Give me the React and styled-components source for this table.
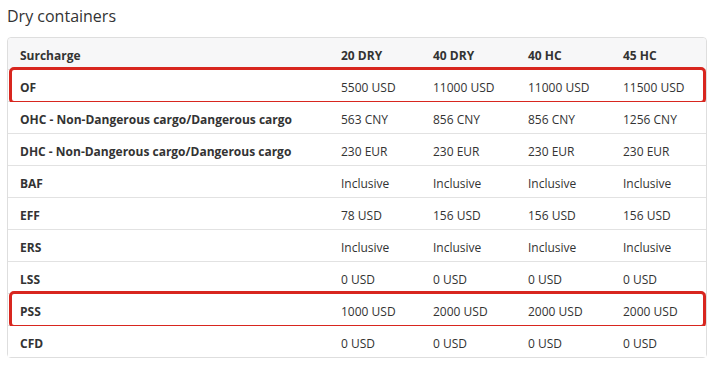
import styled, { createGlobalStyle } from "styled-components";

const GlobalStyle = createGlobalStyle`
  body {
    margin: 0;
    background: #fff;
    font-family: "Open Sans", "Noto Sans", sans-serif;
    color: #333;
  }
`;

const sizes = ["20 DRY", "40 DRY", "40 HC", "45 HC"];

const rows = [
  { name: "OF", values: ["5500 USD", "11000 USD", "11000 USD", "11500 USD"], marked: true },
  { name: "OHC - Non-Dangerous cargo/Dangerous cargo", values: ["563 CNY", "856 CNY", "856 CNY", "1256 CNY"] },
  { name: "DHC - Non-Dangerous cargo/Dangerous cargo", values: ["230 EUR", "230 EUR", "230 EUR", "230 EUR"] },
  { name: "BAF", values: ["Inclusive", "Inclusive", "Inclusive", "Inclusive"] },
  { name: "EFF", values: ["78 USD", "156 USD", "156 USD", "156 USD"] },
  { name: "ERS", values: ["Inclusive", "Inclusive", "Inclusive", "Inclusive"] },
  { name: "LSS", values: ["0 USD", "0 USD", "0 USD", "0 USD"] },
  { name: "PSS", values: ["1000 USD", "2000 USD", "2000 USD", "2000 USD"], marked: true },
  { name: "CFD", values: ["0 USD", "0 USD", "0 USD", "0 USD"] },
];

const App = () => {
  return (
    <Page>
      <GlobalStyle />
      <Title>Dry containers</Title>
      <Table>
        <Row $head>
          <Cell $bold>Surcharge</Cell>
          {sizes.map((s) => (
            <Cell key={s} $bold>{s}</Cell>
          ))}
        </Row>
        {rows.map((r) => (
          <Row key={r.name} $marked={r.marked}>
            <Cell $bold>{r.name}</Cell>
            {r.values.map((v, i) => (
              <Cell key={i}>{v}</Cell>
            ))}
          </Row>
        ))}
      </Table>
    </Page>
  );
};

export default App;

const Page = styled.div`
  padding: 0 7px;
  width: 700px;
`;

const Title = styled.div`
  height: 37px;
  padding-top: 6px;
  box-sizing: border-box;
  font-size: 16px;
  line-height: 20px;
  font-weight: 400;
  color: #333;
`;

const Table = styled.div`
  width: 700px;
  box-sizing: border-box;
  border: 1px solid #dedede;
  border-radius: 4px;
`;

const Row = styled.div`
  position: relative;
  display: grid;
  grid-template-columns: 321px 92px 95px 95px 95px;
  height: 32px;
  box-sizing: border-box;
  border-bottom: 1px solid #e2e2e2;
  background: ${(p) => (p.$head ? "#f7f7f8" : "#fff")};
  border-radius: ${(p) => (p.$head ? "4px 4px 0 0" : "0")};

  &:last-child {
    border-bottom: none;
    height: 31px;
  }

  &::after {
    content: "";
    display: ${(p) => (p.$marked ? "block" : "none")};
    position: absolute;
    left: 1px;
    right: 0px;
    top: -3px;
    bottom: -3px;
    border: 3px solid #d8261f;
    border-radius: 5px;
    pointer-events: none;
  }
`;

const Cell = styled.div`
  display: flex;
  align-items: center;
  padding: 3px 0 0 12px;
  font-size: 12px;
  font-weight: ${(p) => (p.$bold ? 700 : 400)};
  color: #333;
  white-space: nowrap;
`;
